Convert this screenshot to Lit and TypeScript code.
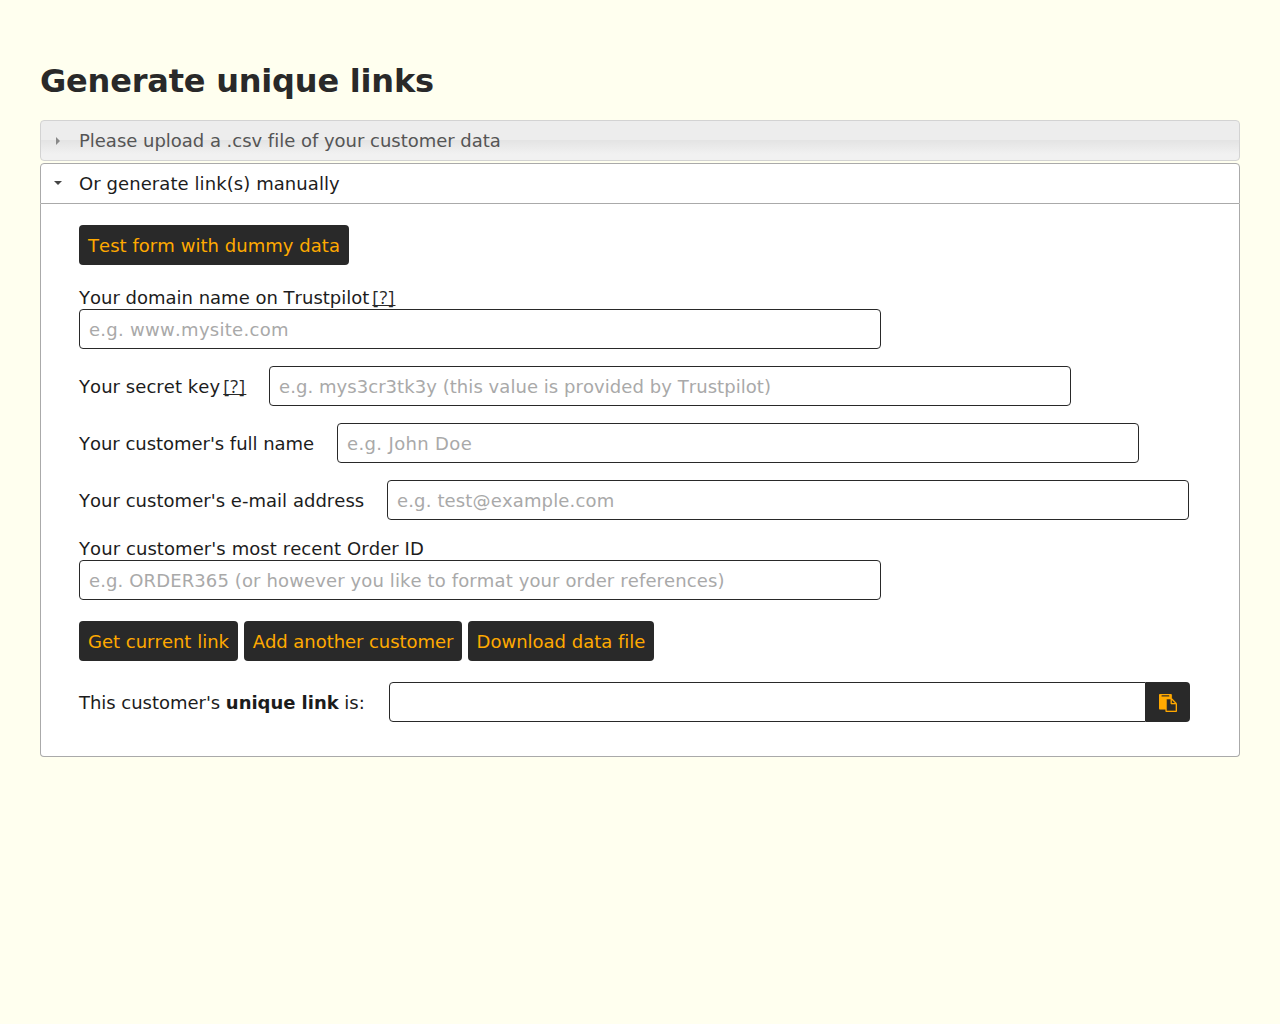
import { LitElement, html, css, svg } from "lit";
import { customElement } from "lit/decorators.js";

const pasteIcon = svg`<path d="M768 1664h896v-640h-416q-40 0-68-28t-28-68v-416h-384v1152zm256-1440v-64q0-13-9.5-22.5t-22.5-9.5h-704q-13 0-22.5 9.5t-9.5 22.5v64q0 13 9.5 22.5t22.5 9.5h704q13 0 22.5-9.5t9.5-22.5zm256 672h299l-299-299v299zm512 128v672q0 40-28 68t-68 28h-960q-40 0-68-28t-28-68v-160h-544q-40 0-68-28t-28-68v-1344q0-40 28-68t68-28h1088q40 0 68 28t28 68v328q21 13 36 28l408 408q28 28 48 76t20 88z"/>`;

@customElement("app-root")
export class AppRoot extends LitElement {
  static styles = css`
    :host {
      display: block;
      box-sizing: border-box;
      min-height: 1024px;
      padding: 60px 40px 0;
      background: #ffffef;
      color: #1c1c1c;
      font: 18px/22px "DejaVu Sans", sans-serif;
      font-kerning: none;
      font-variant-ligatures: none;
    }
    *, *::before, *::after { box-sizing: border-box; }
    h1 {
      margin: 0 0 18px;
      height: 42px;
      font-size: 32px;
      line-height: 42px;
      font-weight: bold;
      color: #292929;
      letter-spacing: -0.2px;
      white-space: nowrap;
    }
    .header {
      display: flex;
      align-items: center;
      height: 41px;
      padding-left: 13px;
      border: 1px solid #d3d3d3;
      border-radius: 4px;
      background: linear-gradient(#ededed 0, #ededed 50%, #e4e4e4 50%, #f1f1f1 85%, #f1f1f1 100%);
      color: #555;
      letter-spacing: -0.02px;
      white-space: nowrap;
    }
    .header.open {
      margin-top: 2px;
      border-color: #aaa;
      border-radius: 4px 4px 0 0;
      background: #fff;
      color: #1c1c1c;
      letter-spacing: 0.08px;
    }
    .arrow { width: 8px; height: 8px; margin: 0 17px 0 0; fill: #888; flex: none; }
    .open .arrow { fill: #454545; }
    .panel {
      height: 553px;
      padding: 21px 38px 0;
      border: 1px solid #aaa;
      border-top: 0;
      border-radius: 0 0 4px 4px;
      background: #fff;
    }
    button {
      height: 40px;
      padding: 1px 0 0;
      border: 0;
      border-radius: 4px;
      background: #292929;
      color: #ffa900;
      font: inherit;
      font-kerning: none;
      letter-spacing: inherit;
      white-space: nowrap;
    }
    .test { display: block; width: 270px; letter-spacing: 0.04px; }
    .field { display: flex; align-items: center; margin-top: 17px; white-space: nowrap; }
    .field.stacked { display: block; }
    .stacked .label { display: block; height: 22px; }
    .first { margin-top: 22px; }
    .order { margin-top: 18px; }
    .order .label { letter-spacing: 0.08px; }
    input {
      display: block;
      width: 802px;
      height: 40px;
      padding: 0 9px;
      border: 1px solid #292929;
      border-radius: 4px;
      background: #fff;
      color: #1c1c1c;
      font: inherit;
      font-kerning: none;
      letter-spacing: 0;
      outline: none;
    }
    input::placeholder { color: #a9a9a9; opacity: 1; }
    .in-domain { letter-spacing: 0.28px; }
    .in-secret { letter-spacing: 0.055px; }
    .in-name { letter-spacing: 0.36px; }
    .in-mail { letter-spacing: 0.15px; }
    .in-order { letter-spacing: 0.12px; }
    .secret, .name, .mail, .link { padding-top: 1px; }
    .secret { width: 190px; letter-spacing: 0.06px; }
    .name { width: 258px; letter-spacing: -0.03px; }
    .mail { width: 308px; letter-spacing: 0.03px; }
    .link { width: 310px; letter-spacing: -0.03px; }
    .help {
      margin-left: 3px;
      color: #292929;
      font-family: "Open Sans", sans-serif;
      font-size: 18px;
      line-height: 20px;
      letter-spacing: 1.2px;
      text-decoration: underline;
      text-decoration-thickness: 1px;
      text-underline-offset: 1px;
      text-decoration-skip-ink: none;
    }
    .actions { display: flex; gap: 6px; margin-top: 21px; }
    .get { width: 159px; }
    .add { width: 218px; letter-spacing: -0.06px; }
    .download { width: 186px; }
    .result { margin-top: 21px; }
    .result input { width: 757px; border-radius: 4px 0 0 4px; }
    .copy {
      display: flex;
      align-items: center;
      justify-content: center;
      width: 44px;
      border-radius: 0 4px 4px 0;
    }
    .copy svg {
      width: 18px;
      height: 18px;
      margin-top: 1px;
      fill: #ffa900;
      stroke: #ffa900;
      stroke-width: 12;
    }
  `;

  render() {
    return html`
      <h1>Generate unique links</h1>
      <div class="header">
        <svg class="arrow" viewBox="0 0 8 8"><path d="M2 0L6 4L2 8Z" /></svg>
        <span>Please upload a .csv file of your customer data</span>
      </div>
      <div class="header open">
        <svg class="arrow" viewBox="0 0 8 8"><path d="M0 1H8L4 5Z" /></svg>
        <span>Or generate link(s) manually</span>
      </div>
      <div class="panel">
        <button class="test">Test form with dummy data</button>
        <div class="field stacked first">
          <span class="label">Your domain name on Trustpilot<a class="help">[?]</a></span>
          <input class="in-domain" placeholder="e.g. www.mysite.com" />
        </div>
        <div class="field">
          <span class="secret">Your secret key<a class="help">[?]</a></span>
          <input class="in-secret" placeholder="e.g. mys3cr3tk3y (this value is provided by Trustpilot)" />
        </div>
        <div class="field">
          <span class="name">Your customer's full name</span>
          <input class="in-name" placeholder="e.g. John Doe" />
        </div>
        <div class="field">
          <span class="mail">Your customer's e-mail address</span>
          <input class="in-mail" placeholder="e.g. test@example.com" />
        </div>
        <div class="field stacked order">
          <span class="label">Your customer's most recent Order ID</span>
          <input class="in-order" placeholder="e.g. ORDER365 (or however you like to format your order references)" />
        </div>
        <div class="actions">
          <button class="get">Get current link</button>
          <button class="add">Add another customer</button>
          <button class="download">Download data file</button>
        </div>
        <div class="field result">
          <span class="link">This customer's <b>unique link</b> is:</span>
          <input aria-label="Unique link" />
          <button class="copy" aria-label="Copy"><svg viewBox="0 0 1792 1792">${pasteIcon}</svg></button>
        </div>
      </div>
    `;
  }
}
